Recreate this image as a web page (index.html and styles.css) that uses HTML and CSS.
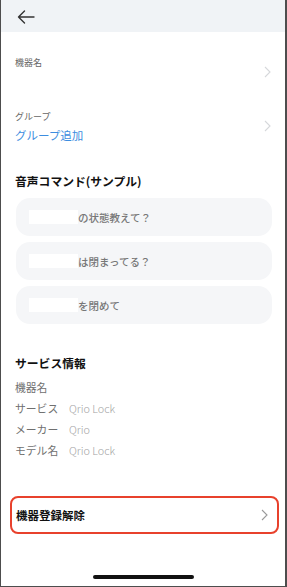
FILE: index.html
```html
<!DOCTYPE html>
<html lang="ja">
<head>
<meta charset="utf-8">
<link rel="stylesheet" href="styles.css">
</head>
<body>
<div class="screen">
  <header class="topbar">
    <svg class="back" width="18" height="14" viewBox="0 0 18 14">
      <path d="M17 7H1.5M7.5 1L1.5 7l6 6" fill="none" stroke="#333" stroke-width="1.4" stroke-linecap="round" stroke-linejoin="round"/>
    </svg>
  </header>

  <div class="content">
    <div class="field">
      <div class="field-text">
        <div class="field-label">機器名</div>
        <div class="field-value"></div>
      </div>
      <svg class="chev light" width="7" height="12" viewBox="0 0 7 12"><path d="M1 1l5 5-5 5" fill="none" stroke="currentColor" stroke-width="1.1"/></svg>
    </div>
    <div class="field">
      <div class="field-text">
        <div class="field-label">グループ</div>
        <div class="field-value blue">グループ追加</div>
      </div>
      <svg class="chev light" width="7" height="12" viewBox="0 0 7 12"><path d="M1 1l5 5-5 5" fill="none" stroke="currentColor" stroke-width="1.1"/></svg>
    </div>

    <h2 class="heading voice">音声コマンド(サンプル)</h2>
    <div class="pills">
      <div class="pill"><span class="mask"></span>の状態教えて？</div>
      <div class="pill"><span class="mask"></span>は閉まってる？</div>
      <div class="pill"><span class="mask"></span>を閉めて</div>
    </div>

    <h2 class="heading service">サービス情報</h2>
    <div class="info">
      <div class="info-row"><span class="info-label">機器名</span><span class="info-value"></span></div>
      <div class="info-row"><span class="info-label">サービス</span><span class="info-value">Qrio Lock</span></div>
      <div class="info-row"><span class="info-label">メーカー</span><span class="info-value">Qrio</span></div>
      <div class="info-row"><span class="info-label">モデル名</span><span class="info-value">Qrio Lock</span></div>
    </div>

    <div class="unregister">
      <span>機器登録解除</span>
      <svg class="chev dark" width="7" height="12" viewBox="0 0 7 12"><path d="M1 1l5 5-5 5" fill="none" stroke="currentColor" stroke-width="1.1"/></svg>
    </div>
  </div>

  <div class="home"></div>
</div>
</body>
</html>
```

FILE: styles.css
```css
* { box-sizing: border-box; margin: 0; padding: 0; }
html, body { width: 287px; height: 587px; overflow: hidden; background: #fff; }
body {
  font-family: "Noto Sans CJK JP", "Noto Sans", sans-serif;
  color: #222;
}
.screen {
  width: 287px;
  height: 587px;
  border-left: 1px solid #4d4d4d;
  border-right: 2px solid #4d4d4d;
  border-bottom: 1px solid #4d4d4d;
  display: flex;
  flex-direction: column;
  background: #fff;
}
.topbar {
  height: 32px;
  background: #f0f3f6;
  display: flex;
  align-items: center;
  padding-left: 16px;
  flex-shrink: 0;
}
.back { display: block; margin-top: 1px; }

.content {
  padding: 13px 13px 0 14px;
  display: flex;
  flex-direction: column;
}
.field {
  height: 54px;
  padding: 9px 0;
  display: flex;
  align-items: center;
  justify-content: space-between;
}
.field-text { display: flex; flex-direction: column; }
.field-label { font-size: 9px; line-height: 18px; color: #666; }
.field-value { font-size: 11.5px; line-height: 18px; height: 18px; color: #333; }
.field-value.blue { color: #3d8de0; }
.chev { display: block; flex-shrink: 0; }
.chev.light { color: #d6d8db; margin-right: 1px; }
.chev.dark { color: #9a9a9a; }

.heading {
  font-size: 11.8px;
  font-weight: 700;
  line-height: 18px;
  color: #111;
}
.heading.voice { margin-top: 19px; }
.heading.service { margin-top: 30px; }

.pills {
  margin-top: 8px;
  display: flex;
  flex-direction: column;
  gap: 6px;
  margin-left: 1px;
}
.pill {
  height: 38px;
  border-radius: 14px;
  background: #f5f6f8;
  display: flex;
  align-items: center;
  padding-left: 13px;
  font-size: 10.5px;
  font-weight: 500;
  color: #777;
}
.mask {
  width: 49px;
  height: 14px;
  background: #fff;
  display: block;
}

.info { margin-top: 5px; }
.info-row {
  height: 21px;
  line-height: 21px;
  font-size: 10.8px;
  white-space: nowrap;
}
.info-label { display: inline-block; width: 54px; color: #707070; }
.info-value { color: #a3a3a3; font-weight: 300; }

.unregister {
  margin-top: 35px;
  margin-left: -5px;
  margin-right: -7px;
  height: 38px;
  border: 2.5px solid #e8412c;
  border-radius: 8px;
  display: flex;
  align-items: center;
  justify-content: space-between;
  padding: 0 9px 0 4px;
  font-size: 11.5px;
  font-weight: 700;
  color: #111;
}

.home {
  margin-top: auto;
  margin-bottom: 7px;
  align-self: center;
  width: 101px;
  height: 4px;
  border-radius: 2px;
  background: #111;
  margin-left: 1px;
}
```
